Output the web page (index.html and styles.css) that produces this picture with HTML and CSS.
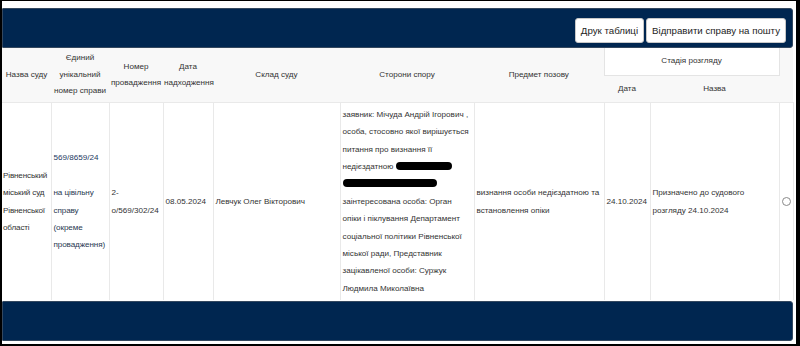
FILE: index.html
```html
<!DOCTYPE html>
<html lang="uk">
<head>
<meta charset="utf-8">
<title>Справа</title>
<link rel="stylesheet" href="styles.css">
</head>
<body>
<div class="frame">
  <div class="bar bar-top">
    <button class="btn">Друк таблиці</button>
    <button class="btn">Відправити справу на пошту</button>
  </div>
  <table class="cases">
    <colgroup>
      <col class="c1"><col class="c2"><col class="c3"><col class="c4"><col class="c5">
      <col class="c6"><col class="c7"><col class="c8"><col class="c9"><col class="c10">
    </colgroup>
    <thead>
      <tr class="h1">
        <th rowspan="2">Назва суду</th>
        <th rowspan="2">Єдиний унікальний номер справи</th>
        <th rowspan="2">Номер провадження</th>
        <th rowspan="2">Дата надходження</th>
        <th rowspan="2">Склад суду</th>
        <th rowspan="2">Сторони спору</th>
        <th rowspan="2">Предмет позову</th>
        <th colspan="2" class="stage">Стадія розгляду</th>
        <th rowspan="2"></th>
      </tr>
      <tr class="h2">
        <th>Дата</th>
        <th>Назва</th>
      </tr>
    </thead>
    <tbody>
      <tr>
        <td class="court">Рівненський міський суд Рівненської області</td>
        <td><a class="case-link">569/8659/24</a><br><br><span class="case-kind">на цівільну справу (окреме провадження)</span></td>
        <td>2-о/569/302/24</td>
        <td>08.05.2024</td>
        <td>Левчук Олег Вікторович</td>
        <td>заявник: Мічуда Андрій Ігорович , особа, стосовно якої вирішується питання про визнання її недієздатною <span class="redact r1"></span> <span class="redact r2"></span> заінтересована особа: Орган опіки і піклування Департамент соціальної політики Рівненської міської ради, Представник зацікавленої особи: Суржук Людмила Миколаївна</td>
        <td>визнання особи недієздатною та встановлення опіки</td>
        <td>24.10.2024</td>
        <td>Призначено до судового розгляду 24.10.2024</td>
        <td class="pick"><span class="radio"></span></td>
      </tr>
    </tbody>
  </table>
  <div class="bar bar-bottom"></div>
</div>
</body>
</html>
```

FILE: styles.css
```css
html, body {
  margin: 0;
  padding: 0;
  background: #fff;
}
.frame {
  box-sizing: content-box;
  width: 791px;
  height: 336px;
  border-style: solid;
  border-color: #000;
  border-width: 1px 4px 2px 2px;
  padding: 7px 3px 0 0;
  font-family: "Liberation Sans", Arial, sans-serif;
  color: #333;
}
.bar {
  background: #002650;
  border: 1px solid #34485f;
  border-radius: 1px 3px 3px 1px;
  box-sizing: border-box;
  height: 40px;
}
.bar-top {
  display: flex;
  justify-content: flex-end;
  align-items: flex-end;
  gap: 2px;
  padding: 0 6px 4px 0;
}
.bar-bottom {
  margin-top: 1px;
}
.btn {
  font-family: "Liberation Sans", Arial, sans-serif;
  font-size: 9.7px;
  line-height: 13px;
  color: #222;
  background: #fff;
  border: 1px solid #c8c8c8;
  border-radius: 3px;
  padding: 5px 5px;
  margin: 0;
}
.cases {
  width: 791px;
  table-layout: fixed;
  border-collapse: collapse;
  font-size: 8.1px;
}
.c1 { width: 49px; }
.c2 { width: 58px; }
.c3 { width: 54px; }
.c4 { width: 50px; }
.c5 { width: 127px; }
.c6 { width: 134px; }
.c7 { width: 130px; }
.c8 { width: 46px; }
.c9 { width: 129px; }
.c10 { width: 14px; }
.cases th {
  background: #f8f8f8;
  font-weight: normal;
  text-align: center;
  vertical-align: middle;
  line-height: 16.5px;
  padding: 0 1px;
  color: #333;
}
.cases .h1 th { height: 27px; }
.cases .h2 th { height: 26px; }
.cases th.stage {
  background: #fff;
  border: 1px solid #e4e4e4;
  border-top: none;
}
.cases tbody td {
  border: 1px solid #e9e9e9;
  border-bottom: none;
  vertical-align: middle;
  text-align: left;
  line-height: 17.4px;
  padding: 2px 1px 2px 2px;
  height: 193px;
}
.cases tbody td:first-child { border-left: none; }
.cases tbody td.court { padding-left: 1px; letter-spacing: -0.15px; }
.case-link { color: #1d3a63; }
.case-kind { color: #2a3a52; letter-spacing: -0.1px; }
.redact {
  display: inline-block;
  background: #000;
  height: 8px;
  border-radius: 4px;
  vertical-align: -1px;
}
.r1 { width: 56px; }
.r2 { width: 94px; }
.cases td.pick {
  text-align: center;
  padding: 0;
}
.radio {
  display: inline-block;
  width: 7px;
  height: 7px;
  border: 1px solid #8a8a8a;
  border-radius: 50%;
  vertical-align: middle;
}
```
